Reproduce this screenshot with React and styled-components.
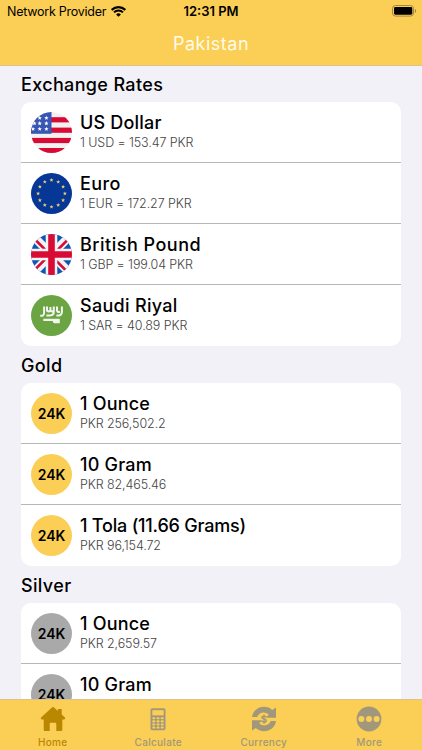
import React from 'react'
import styled, { createGlobalStyle } from 'styled-components'

const GlobalStyle = createGlobalStyle`
*{
    box-sizing: border-box;
}
body{
    margin: 0;
    background: #f2f1f8;
    font-family: Inter, "Open Sans", sans-serif;
    overflow: hidden;
}
`

const WifiIcon = () => (
    <svg width="15" height="11" viewBox="0 0 15 11">
        <path d="M0.7 3.9A9.6 9.6 0 0 1 14.3 3.9" fill="none" stroke="#000" strokeWidth="2.1" />
        <path d="M3 6.4A6.4 6.4 0 0 1 12 6.4" fill="none" stroke="#000" strokeWidth="2" />
        <path d="M7.5 10.8L5.1 8.4A3.4 3.4 0 0 1 9.9 8.4Z" />
    </svg>
)

const BatteryIcon = () => (
    <svg width="25" height="12" viewBox="0 0 25 12">
        <rect x="0.5" y="0.5" width="21" height="10.6" rx="3" fill="none" stroke="#a08643" />
        <rect x="2" y="2" width="18.3" height="7.7" rx="1.4" />
        <path d="M22.9 4v4c1.7-.7 1.7-3.3 0-4z" fill="#a08643" />
    </svg>
)

const starPath = (cx, cy, r) => {
    const points = []
    for (let i = 0; i < 10; i++) {
        const a = (Math.PI / 5) * i - Math.PI / 2
        const d = i % 2 ? r * 0.45 : r
        points.push(`${cx + d * Math.cos(a)},${cy + d * Math.sin(a)}`)
    }
    return points.join(' ')
}

const UsFlag = () => (
    <svg width="41" height="41" viewBox="0 0 41 41">
        <clipPath id="us"><circle cx="20.5" cy="20.5" r="20.5" /></clipPath>
        <g clipPath="url(#us)">
            <rect width="41" height="41" fill="#f3f2f3" />
            {[5.2, 15.6, 25.9, 36].map(y => (
                <rect key={y} y={y} width="41" height="5.2" fill="#d80b34" />
            ))}
            <rect width="20.5" height="21.8" fill="#3757b5" />
            {[[8.7, 6], [15.4, 6], [3.4, 11.4], [8.7, 11.4], [15.4, 11.4], [2, 17], [8.7, 17], [15.4, 17]].map(([x, y]) => (
                <polygon key={`${x}-${y}`} points={starPath(x, y, 2.3)} fill="#fff" />
            ))}
        </g>
    </svg>
)

const EuFlag = () => (
    <svg width="41" height="41" viewBox="0 0 41 41">
        <circle cx="20.5" cy="20.5" r="20.5" fill="#063696" />
        {[...Array(12)].map((_, i) => {
            const a = (Math.PI / 6) * i
            return <polygon key={i} points={starPath(20.5 + 13.4 * Math.sin(a), 20.5 - 13.4 * Math.cos(a), 2.1)} fill="#e3cb72" />
        })}
    </svg>
)

const UkFlag = () => (
    <svg width="41" height="41" viewBox="0 0 41 41">
        <clipPath id="uk"><circle cx="20.5" cy="20.5" r="20.5" /></clipPath>
        <g clipPath="url(#uk)">
            <rect width="41" height="41" fill="#0f56b0" />
            <path d="M0 0L41 41M41 0L0 41" stroke="#f3f2f5" strokeWidth="8.5" />
            <path d="M20.5 22L41 42.5M19 20.5L-1.5 0M22 20.5L42.5 0M20.5 19L-1.5 41" stroke="#d80b34" strokeWidth="2.6" />
            <path d="M20.5 0V41M0 20.5H41" stroke="#f3f2f5" strokeWidth="11.6" />
            <path d="M20.5 0V41M0 20.5H41" stroke="#d80b34" strokeWidth="6.6" />
        </g>
    </svg>
)

const SaFlag = () => (
    <svg width="41" height="41" viewBox="0 0 41 41">
        <circle cx="20.5" cy="20.5" r="20.5" fill="#6ba443" />
        <g fill="none" stroke="#f3f5f0" strokeWidth="2">
            <path d="M9.2 20.6c2.4.5 3.9-.4 3.9-2.6V11.4M16 11.4v3.4c0 2.2 3.4 2.2 3.4 0V12M19.4 14.8c0 2.2 3.4 2.2 3.4 0V11.4M15.4 20.4h3.6c2.5 0 3.8-1 3.8-3.6V14M26 11.4v3.9c0 1.4 1 1.9 3 1.7M25.4 20.5c3.8.4 5.5-.9 5.5-3.6V11.4" />
            <path d="M12.3 24.9H28.8" strokeWidth="2.4" />
            <path d="M21.8 26h7v2.3h-4.9c-1.2 0-2.1-.8-2.1-2.3z" fill="#f3f5f0" stroke="none" />
        </g>
    </svg>
)

const HomeIcon = () => (
    <svg width="26" height="26" viewBox="0 0 26 26" fill="#b98700">
        <path d="M12.2 1.3a1.2 1.2 0 0 1 1.6 0L17.8 5V2.9h3.9v5.7l3.2 3c.7.7.3 1.8-.7 1.8h-1.9v10.1c0 1-.6 1.6-1.6 1.6h-4.4v-7.2c0-.8-.4-1.2-1.2-1.2h-4.2c-.8 0-1.2.4-1.2 1.2v7.2H5.3c-1 0-1.6-.6-1.6-1.6V13.4H1.8c-1 0-1.4-1.1-.7-1.8z" />
    </svg>
)

const CalculatorIcon = () => (
    <svg width="26" height="26" viewBox="0 0 26 26" fill="#a1987c">
        <rect x="5.5" y="2.2" width="15" height="22" rx="1.7" />
        <rect x="7.3" y="4.2" width="11.4" height="5.2" fill="#fbce56" />
        {[11.2, 14.3, 17.4, 20.5].map(y => [7.3, 11.5, 15.7].map(x => (
            <rect key={`${x}-${y}`} x={x} y={y} width="3" height="2.1" rx=".7" fill="#fbce56" />
        )))}
    </svg>
)

const CurrencyIcon = () => (
    <svg width="26" height="26" viewBox="0 0 26 26">
        <path d="M1 11C1.8 4.8 7 .8 13 .8c3.4 0 6.1 1.2 8.2 3.2L25 1.4v10.4H14.9l2.9-3C14 5 7.8 6.4 6.2 11zM25 15c-.8 6.2-6 10.2-12 10.2-3.4 0-6.1-1.2-8.2-3.2L1 24.6V14.2h10.1l-2.9 3c3.8 3.8 10 2.4 11.6-2.2z" fill="#a1987c" />
        <path d="M15.4 11.2c-.4-.8-1.2-1.1-2.4-1.1-2.9 0-2.9 2.4 0 2.9 3.1.5 3 3.1 0 3.1-1.3 0-2.1-.4-2.5-1.3M13 8.4v9.4" fill="none" stroke="#a1987c" strokeWidth="1.4" />
    </svg>
)

const MoreIcon = () => (
    <svg width="26" height="26" viewBox="0 0 26 26">
        <circle cx="13" cy="13" r="12.4" fill="#a1987c" />
        {[5.4, 13, 20.6].map(x => <circle key={x} cx={x} cy="13" r="3" fill="#fbce56" />)}
    </svg>
)

const sections = [
    {
        title: 'Exchange Rates',
        rows: [
            { icon: <UsFlag />, name: 'US Dollar', spacing: 0.2, value: '1 USD = 153.47 PKR' },
            { icon: <EuFlag />, name: 'Euro', spacing: 0.4, value: '1 EUR = 172.27 PKR' },
            { icon: <UkFlag />, name: 'British Pound', spacing: 0.5, value: '1 GBP = 199.04 PKR' },
            { icon: <SaFlag />, name: 'Saudi Riyal', spacing: 0.3, value: '1 SAR = 40.89 PKR' },
        ],
    },
    {
        title: 'Gold',
        color: '#fbce56',
        rows: [
            { name: '1 Ounce', spacing: 0.2, value: 'PKR 256,502.2' },
            { name: '10 Gram', spacing: 0.2, value: 'PKR 82,465.46' },
            { name: '1 Tola (11.66 Grams)', spacing: -0.2, value: 'PKR 96,154.72' },
        ],
    },
    {
        title: 'Silver',
        color: '#a9a9a9',
        rows: [
            { name: '1 Ounce', spacing: 0.2, value: 'PKR 2,659.57' },
            { name: '10 Gram', spacing: 0.2, value: 'PKR 855.04' },
        ],
    },
]

const tabs = [
    { label: 'Home', icon: <HomeIcon />, active: true },
    { label: 'Calculate', icon: <CalculatorIcon /> },
    { label: 'Currency', icon: <CurrencyIcon /> },
    { label: 'More', icon: <MoreIcon /> },
]

const App = () => {
    return (
        <Screen>
            <GlobalStyle />
            <Header>
                <StatusBar>
                    <Carrier>Network Provider <WifiIcon /></Carrier>
                    <Clock>12:31 PM</Clock>
                    <Battery><BatteryIcon /></Battery>
                </StatusBar>
                <Title>Pakistan</Title>
            </Header>
            <Content>
                {sections.map(section => (
                    <React.Fragment key={section.title}>
                        <SectionTitle>{section.title}</SectionTitle>
                        <Card>
                            {section.rows.map(row => (
                                <Row key={row.name}>
                                    {row.icon || <Karat $color={section.color}>24K</Karat>}
                                    <RowText>
                                        <Name $spacing={row.spacing}>{row.name}</Name>
                                        <Value>{row.value}</Value>
                                    </RowText>
                                </Row>
                            ))}
                        </Card>
                    </React.Fragment>
                ))}
            </Content>
            <TabBar>
                {tabs.map(tab => (
                    <Tab key={tab.label} $active={tab.active}>
                        {tab.icon}
                        <TabLabel>{tab.label}</TabLabel>
                    </Tab>
                ))}
            </TabBar>
        </Screen>
    )
}

const Screen = styled.div`
width: 100%;
height: 100vh;
display: flex;
flex-direction: column;
overflow: hidden;
`
const Header = styled.header`
height: 66px;
flex-shrink: 0;
background: #fbce56;
border-bottom: 1px solid #dcc38a;
`
const StatusBar = styled.div`
height: 22px;
padding: 0 7px;
display: grid;
grid-template-columns: 1fr auto 1fr;
align-items: center;
font-size: 13px;
color: #000;
`
const Carrier = styled.span`
display: flex;
align-items: center;
gap: 5px;
font-size: 12.5px;
letter-spacing: -0.25px;
white-space: nowrap;
`
const Clock = styled.span`
font-weight: 600;
`
const Battery = styled.span`
display: flex;
justify-content: flex-end;
margin-right: -2px;
`
const Title = styled.h1`
margin: 0;
height: 43px;
display: flex;
align-items: center;
justify-content: center;
font-size: 18px;
font-weight: 400;
letter-spacing: 0.5px;
color: #fffbe9;
`
const Content = styled.main`
flex: 1;
min-height: 0;
padding: 0 21px;
overflow: hidden;
`
const SectionTitle = styled.h2`
margin: 0;
height: 36px;
padding-top: 1px;
line-height: 36px;
font-size: 18px;
font-weight: 500;
letter-spacing: 0.35px;
color: #000;
&:not(:first-child){
    height: 37px;
    padding-top: 2px;
}
`
const Card = styled.div`
background: #fff;
border-radius: 10px;
overflow: hidden;
`
const Row = styled.div`
height: 61px;
padding: 0 10px;
display: flex;
align-items: center;
gap: 8px;
&:not(:last-child){
    box-shadow: inset 0 -1px #b7b7b7;
}
`
const Karat = styled.div`
width: 41px;
height: 41px;
border-radius: 50%;
display: flex;
align-items: center;
justify-content: center;
background: ${props => props.$color};
font-size: 14px;
font-weight: 600;
color: #000;
`
const RowText = styled.div`
display: flex;
flex-direction: column;
padding-bottom: 2px;
`
const Name = styled.span`
font-size: 18px;
line-height: 22px;
font-weight: 500;
letter-spacing: ${props => props.$spacing}px;
color: #000;
white-space: nowrap;
`
const Value = styled.span`
font-size: 12.5px;
line-height: 18px;
font-weight: 300;
letter-spacing: -0.1px;
color: #444;
`
const TabBar = styled.nav`
height: 51px;
flex-shrink: 0;
display: grid;
grid-template-columns: repeat(4, 1fr);
background: #fbce56;
border-top: 1px solid #dcc38a;
`
const Tab = styled.div`
display: flex;
flex-direction: column;
align-items: center;
padding-top: 6px;
color: ${props => props.$active ? '#b98700' : '#a1987c'};
`
const TabLabel = styled.span`
margin-top: 4px;
font-size: 10px;
line-height: 13px;
font-weight: 500;
letter-spacing: 0.3px;
`

export default App
